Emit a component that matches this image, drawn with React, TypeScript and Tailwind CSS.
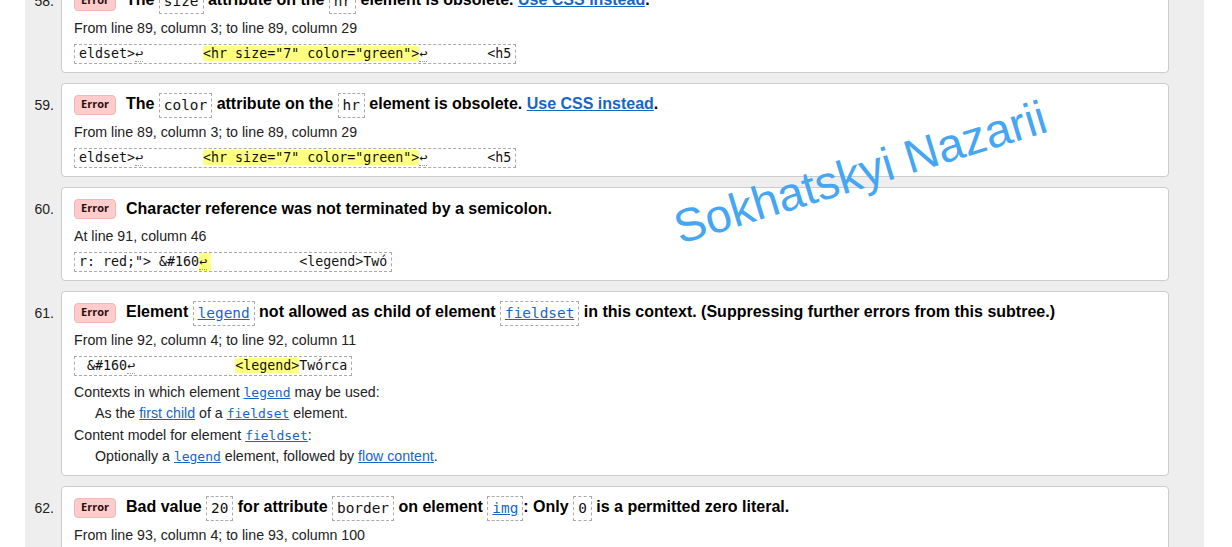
import React from 'react';

const mono = "font-['DejaVu_Sans_Mono',monospace]";
const linkCls = 'text-[#1666c9] underline';

const Badge = () => (
  <span className="mr-[10px] inline-flex h-[20px] shrink-0 items-center rounded-[4px] border border-[#f2b6b6] bg-[#ffcccc] px-[6px] font-['Open_Sans',sans-serif] text-[11px] font-bold text-[#2a0c0c]">
    Error
  </span>
);

const Code = ({ children, link }: { children: React.ReactNode; link?: boolean }) => (
  <code
    className={`inline-block border border-dashed border-[#aaa] px-[4px] align-middle text-[14.4px] font-normal leading-[23px] ${mono} ${
      link ? linkCls : 'text-[#111]'
    }`}
  >
    {children}
  </code>
);

const Lf = ({ mark }: { mark?: boolean }) => (
  <span className={`inline-block w-[12px] ${mark ? 'bg-[#ffff80]' : ''}`}>
    <span className="border-b border-dotted border-[#999]">↩</span>
  </span>
);

const Hl = ({ children }: { children: React.ReactNode }) => <span className="bg-[#ffff80]">{children}</span>;

const Extract = ({ children }: { children: React.ReactNode }) => (
  <div
    className={`mt-[6px] w-fit whitespace-pre border border-dashed border-[#aaa] px-[4px] text-[13.3px] leading-[18px] text-[#111] ${mono}`}
  >
    {children}
  </div>
);

const M = ({ children }: { children: React.ReactNode }) => (
  <a className={`${linkCls} ${mono} text-[13px]`}>{children}</a>
);

const Item = ({
  n,
  heading,
  location,
  children,
}: {
  n: number;
  heading: React.ReactNode;
  location: string;
  children?: React.ReactNode;
}) => (
  <li className="flex">
    <div className="w-[36px] shrink-0 pr-[7px] pt-[12px] text-right text-[14px] leading-[20px] text-[#222]">{n}.</div>
    <div className="flex-1 rounded-[4px] border border-[#cccccc] bg-white px-[12px] pt-[8px] pb-[8px]">
      <div className="flex h-[25px] items-center">
        <Badge />
        <p className="whitespace-nowrap text-[16px] font-bold leading-[25px] text-black">{heading}</p>
      </div>
      <p className="mt-[5px] text-[14.2px] leading-[20px] text-[#222]">{location}</p>
      {children}
    </div>
  </li>
);

export default function App() {
  return (
    <div className="relative flex min-h-screen overflow-hidden bg-white font-['Liberation_Sans',Arial,sans-serif]">
      <div className="w-[25px] shrink-0" />
      <div className="flex-1 bg-[#eeeeee]">
        <ol className="-mt-[21px] flex flex-col gap-[10px] pr-[35px]">
          <Item
            n={58}
            heading={
              <>
                The <Code>size</Code> attribute on the <Code>hr</Code> element is obsolete.{' '}
                <a className={linkCls}>Use CSS instead</a>.
              </>
            }
            location="From line 89, column 3; to line 89, column 29"
          >
            <Extract>
              eldset&gt;<Lf />{'       '}
              <Hl>&lt;hr size="7" color="green"&gt;</Hl>
              <Lf />{'       '}&lt;h5
            </Extract>
          </Item>
          <Item
            n={59}
            heading={
              <>
                The <Code>color</Code> attribute on the <Code>hr</Code> element is obsolete.{' '}
                <a className={linkCls}>Use CSS instead</a>.
              </>
            }
            location="From line 89, column 3; to line 89, column 29"
          >
            <Extract>
              eldset&gt;<Lf />{'       '}
              <Hl>&lt;hr size="7" color="green"&gt;</Hl>
              <Lf />{'       '}&lt;h5
            </Extract>
          </Item>
          <Item n={60} heading="Character reference was not terminated by a semicolon." location="At line 91, column 46">
            <Extract>
              r: red;"&gt; &amp;#160<Lf mark />{'           '}&lt;legend&gt;Twó
            </Extract>
          </Item>
          <Item
            n={61}
            heading={
              <>
                Element <Code link>legend</Code> not allowed as child of element <Code link>fieldset</Code> in this
                context. (Suppressing further errors from this subtree.)
              </>
            }
            location="From line 92, column 4; to line 92, column 11"
          >
            <Extract>
              {' '}&amp;#160<Lf />{'            '}
              <Hl>&lt;legend&gt;</Hl>Twórca
            </Extract>
            <div className="mt-[6px] text-[14.2px] leading-[21.25px] text-[#222]">
              <p>
                Contexts in which element <M>legend</M> may be used:
              </p>
              <p className="pl-[21px]">
                As the <a className={linkCls}>first child</a> of a <M>fieldset</M> element.
              </p>
              <p>
                Content model for element <M>fieldset</M>:
              </p>
              <p className="pl-[21px]">
                Optionally a <M>legend</M> element, followed by <a className={linkCls}>flow content</a>.
              </p>
            </div>
          </Item>
          <Item
            n={62}
            heading={
              <>
                Bad value <Code>20</Code> for attribute <Code>border</Code> on element <Code link>img</Code>: Only{' '}
                <Code>0</Code> is a permitted zero literal.
              </>
            }
            location="From line 93, column 4; to line 93, column 100"
          >
            <Extract>
              {'   '}
              <Hl>&lt;img src="logo.png" border="20"&gt;</Hl>
              <Lf />
            </Extract>
          </Item>
        </ol>
      </div>
      <div className="w-[28px] shrink-0" />

      <div className="pointer-events-none absolute left-[860px] top-[172px] h-0 w-0">
        <span className="absolute left-0 top-0 -translate-x-1/2 -translate-y-1/2 -rotate-[17deg] whitespace-nowrap text-[47px] leading-[47px] text-[#45a6f4]">
          Sokhatskyi Nazarii
        </span>
      </div>
    </div>
  );
}
